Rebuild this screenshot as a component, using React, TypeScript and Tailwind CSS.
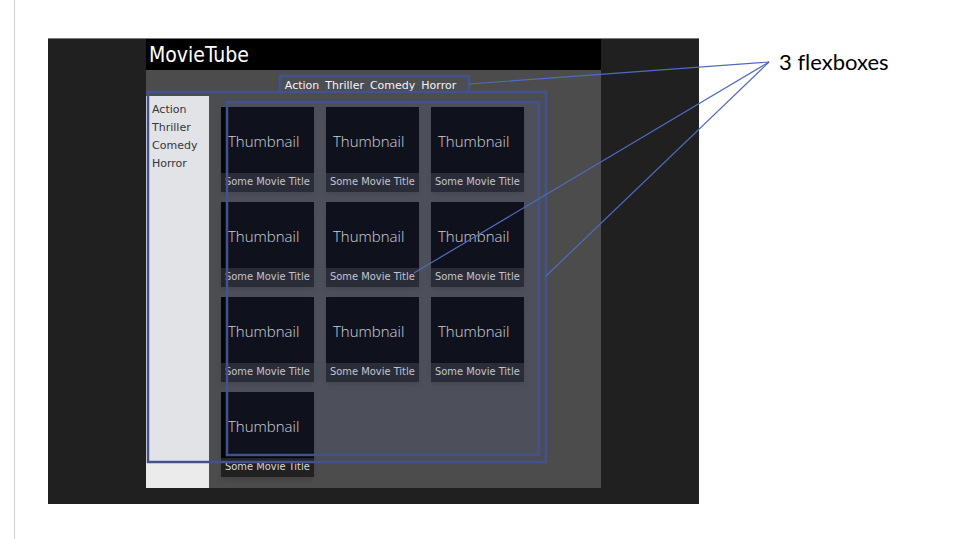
const genres = ["Action", "Thriller", "Comedy", "Horror"];
const movies = Array.from({ length: 10 }, (_, i) => i);

function MovieCard() {
  return (
    <article className="w-[93px] bg-[#212121] shadow-md">
      <div className="flex h-[66px] items-center bg-black px-[7px] pt-[2px] font-['Open_Sans',sans-serif] text-[15px] font-light text-[#e4e4e4]">
        Thumbnail
      </div>
      <h2 className="px-1 pb-[2px] text-[11px] leading-[17px] whitespace-nowrap text-[#dadada]">
        Some Movie Title
      </h2>
    </article>
  );
}

export default function App() {
  return (
    <div className="relative min-h-screen bg-white pl-[14px]">
      <div className="flex min-h-screen items-start gap-20 border-l border-[#d0d0dc] pt-[38px] pl-[33px]">
        <div className="w-[651px] shrink-0 border-t border-[#7a7a7a] bg-[#202020] px-[98px] pb-4 font-['DejaVu_Sans_Condensed','DejaVu_Sans',sans-serif]">
          <div className="bg-[#4c4c4c]">
            <header className="bg-black px-[3px] pt-px">
              <h1 className="text-[21px] leading-[30px] text-white">MovieTube</h1>
            </header>
            <nav className="flex justify-center gap-[6px] pt-[7px] pr-[6px] pb-px font-['DejaVu_Sans',sans-serif] text-[11px] leading-[18px] text-white">
              {genres.map((g) => (
                <a key={g} href="#main">{g}</a>
              ))}
            </nav>
            <div className="flex">
              <aside className="w-[63px] bg-[#ebebeb] px-[6px] pt-[5px] font-['DejaVu_Sans',sans-serif] text-[11px] leading-[18px] text-[#333]">
                <ul>
                  {genres.map((g) => (
                    <li key={g}><a href="#main">{g}</a></li>
                  ))}
                </ul>
              </aside>
              <main id="main" className="flex flex-1 flex-wrap gap-x-3 gap-y-[10px] px-3 pt-[11px] pr-[60px] pb-[11px]">
                {movies.map((m) => (
                  <MovieCard key={m} />
                ))}
              </main>
            </div>
          </div>
        </div>
        <p className="pt-2 font-['Lato',sans-serif] text-[22px] leading-8 whitespace-nowrap text-black [font-variant-ligatures:none]">
          3 flexboxes
        </p>
      </div>
      <svg
        className="pointer-events-none absolute top-0 left-0"
        width="960"
        height="539"
        viewBox="0 0 960 539"
        fill="#5c6ca4"
        stroke="#42528f"
        strokeWidth="2.5"
        aria-hidden="true"
      >
        <path d="M280 91V76H469V91" fillOpacity="0.07" />
        <rect x="148" y="92" width="398" height="370" fillOpacity="0.06" />
        <rect x="227" y="102" width="312" height="353" fillOpacity="0.12" />
        <g stroke="#526bc0" strokeWidth="1.2" fill="none">
          <path d="M469 84L769 62L414 273" />
          <path d="M769 62L546 276" />
        </g>
      </svg>
    </div>
  );
}
